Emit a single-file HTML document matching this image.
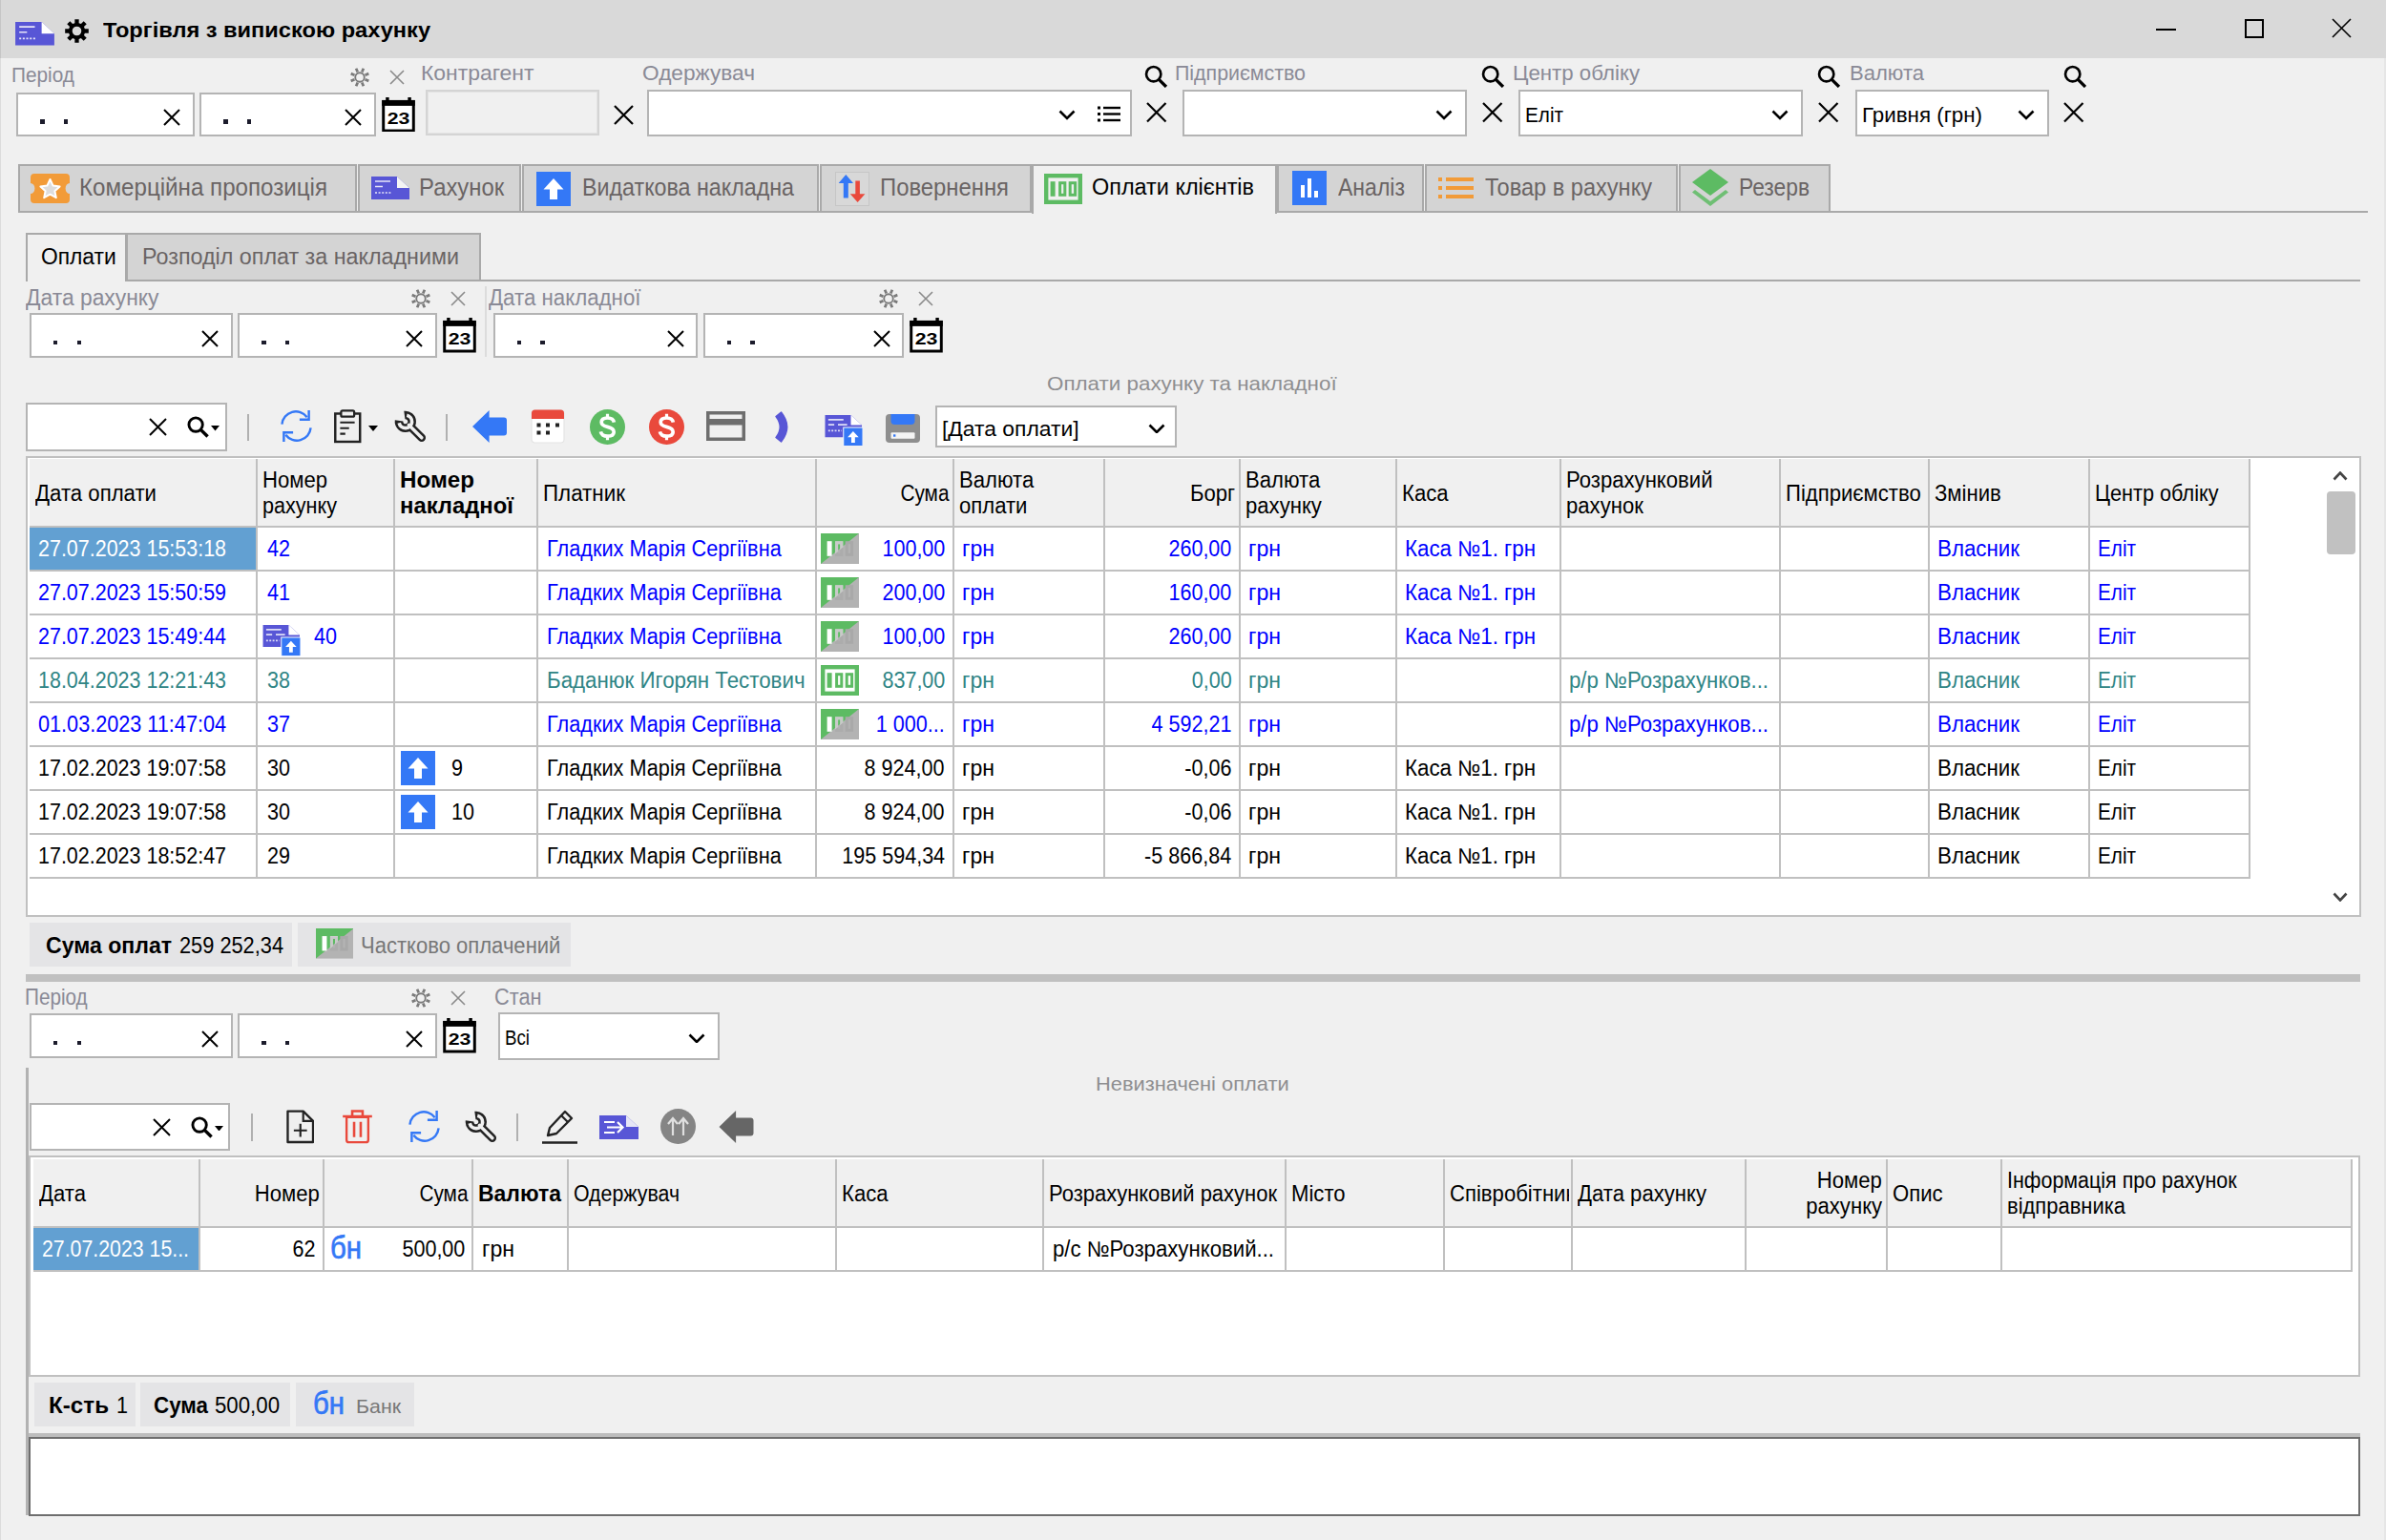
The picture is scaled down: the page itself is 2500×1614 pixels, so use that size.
<!DOCTYPE html>
<html><head><meta charset="utf-8"><title>UI</title>
<style>
html,body{margin:0;padding:0;}
body{width:2500px;height:1614px;background:#f0f0f0;position:relative;overflow:hidden;font-family:"Liberation Sans",sans-serif;}
body>div,body>span,body>svg{position:absolute;box-sizing:border-box;}
body>span{white-space:nowrap;}
</style></head><body>
<div style="left:0px;top:0px;width:2500px;height:61px;background:#d9d9d9;"></div>
<div style="left:0px;top:0px;width:1px;height:61px;background:#c6c6c6;"></div>
<div style="left:0px;top:61px;width:1px;height:1553px;background:#dcdcdc;"></div>
<div style="left:2498px;top:61px;width:2px;height:1553px;background:#e6e6e6;"></div>
<svg style="left:16px;top:23px" width="41" height="24.5" viewBox="0 0 40 24"><path d="M0 0H27L40 12V24H0Z" fill="#5856d6"/><path d="M27 0L40 12H27Z" fill="#fff"/><path d="M4 5H20M4 10.5H12" stroke="#fff" stroke-width="1.6" opacity=".85"/><path d="M4 17H22" stroke="#fff" stroke-width="1.6" stroke-dasharray="2 1.6" opacity=".85"/></svg>
<svg style="left:68px;top:20px" width="25" height="25" viewBox="0 0 24 24"><path d="M20.04 9.95L23.82 9.91L23.82 14.09L20.04 14.05L19.14 16.23L21.83 18.88L18.88 21.83L16.23 19.14L14.05 20.04L14.09 23.82L9.91 23.82L9.95 20.04L7.77 19.14L5.12 21.83L2.17 18.88L4.86 16.23L3.96 14.05L0.18 14.09L0.18 9.91L3.96 9.95L4.86 7.77L2.17 5.12L5.12 2.17L7.77 4.86L9.95 3.96L9.91 0.18L14.09 0.18L14.05 3.96L16.23 4.86L18.88 2.17L21.83 5.12L19.14 7.77ZM16.6 12A4.6 4.6 0 1 0 7.4 12A4.6 4.6 0 1 0 16.6 12Z" fill="#000" fill-rule="evenodd"/></svg>
<span style="left:108.3px;top:18.2px;font-size:21.5px;line-height:28px;color:#000;font-weight:bold;transform:scaleX(1.0985);transform-origin:0 0;">Торгівля з випискою рахунку</span>
<div style="left:2259px;top:29.5px;width:21px;height:2px;background:#000;"></div>
<div style="left:2352px;top:19.5px;width:20px;height:20px;border:2px solid #000;"></div>
<svg style="left:2443px;top:19px" width="21" height="21" viewBox="0 0 21 21"><path d="M1 1L20 20M20 1L1 20" stroke="#000" stroke-width="1.6" fill="none"/></svg>
<span style="left:11.5px;top:65.2px;font-size:21.5px;line-height:28px;color:#8a8a96;transform:scaleX(0.9682);transform-origin:0 0;">Період</span>
<svg style="left:366px;top:70px" width="22" height="22" viewBox="0 0 24 24"><circle cx="12" cy="12" r="5.2" fill="none" stroke="#7a7a7a" stroke-width="2"/><path d="M18.01 14.49L22.16 16.21M14.49 18.01L16.21 22.16M9.51 18.01L7.79 22.16M5.99 14.49L1.84 16.21M5.99 9.51L1.84 7.79M9.51 5.99L7.79 1.84M14.49 5.99L16.21 1.84M18.01 9.51L22.16 7.79" stroke="#7a7a7a" stroke-width="3" stroke-linecap="butt"/></svg>
<svg style="left:408px;top:73px" width="16" height="16" viewBox="0 0 16 16"><path d="M1 1L15 15M15 1L1 15" stroke="#8a8a8a" stroke-width="1.6" fill="none"/></svg>
<div style="left:17px;top:96.5px;width:186.5px;height:46.5px;background:#fff;border:2px solid #b4b4b4;"></div>
<div style="left:42.3px;top:125.0px;width:4.4px;height:4.6px;background:#1c1c2c;"></div>
<div style="left:66.8px;top:125.0px;width:4.4px;height:4.6px;background:#1c1c2c;"></div>
<svg style="left:171.0px;top:114.0px" width="18" height="18" viewBox="0 0 18 18"><path d="M1 1L17 17M17 1L1 17" stroke="#000" stroke-width="2" fill="none"/></svg>
<div style="left:209px;top:96.5px;width:184.5px;height:46.5px;background:#fff;border:2px solid #b4b4b4;"></div>
<div style="left:234.3px;top:125.0px;width:4.4px;height:4.6px;background:#1c1c2c;"></div>
<div style="left:258.8px;top:125.0px;width:4.4px;height:4.6px;background:#1c1c2c;"></div>
<svg style="left:361.0px;top:114.0px" width="18" height="18" viewBox="0 0 18 18"><path d="M1 1L17 17M17 1L1 17" stroke="#000" stroke-width="2" fill="none"/></svg>
<svg style="left:400px;top:101.5px" width="35" height="36.5" viewBox="0 0 35 37"><rect x="1.5" y="4.5" width="32" height="31" fill="#fff" stroke="#000" stroke-width="3"/><rect x="0" y="3" width="35" height="6" fill="#000"/><rect x="4" y="0" width="3.5" height="4" fill="#000"/><rect x="27.5" y="0" width="3.5" height="4" fill="#000"/><text x="17.5" y="28.5" font-family="Liberation Sans" font-weight="bold" font-size="16.5" text-anchor="middle" textLength="24" lengthAdjust="spacingAndGlyphs" fill="#000">23</text></svg>
<span style="left:441.0px;top:63.4px;font-size:21.5px;line-height:28px;color:#8a8a96;transform:scaleX(1.0661);transform-origin:0 0;">Контрагент</span>
<div style="left:446px;top:94px;width:182px;height:48px;background:#f0f0f0;border:2px solid #d4d4d4;"></div>
<div style="left:448px;top:96px;width:178px;height:44px;background:#f0f0f0;border:1px solid #e3e3e3;"></div>
<svg style="left:643px;top:110px" width="21" height="21" viewBox="0 0 21 21"><path d="M1 1L20 20M20 1L1 20" stroke="#000" stroke-width="2.2" fill="none"/></svg>
<span style="left:673.0px;top:63.4px;font-size:21.5px;line-height:28px;color:#8a8a96;transform:scaleX(1.0541);transform-origin:0 0;">Одержувач</span>
<div style="left:678px;top:94px;width:507.5px;height:49px;background:#fff;border:2px solid #b4b4b4;"></div>
<svg style="left:1108.5px;top:115.0px" width="18" height="10.5" viewBox="0 0 18 10.5"><path d="M1.5 1.5L9.0 9.0L16.5 1.5" fill="none" stroke="#000" stroke-width="2.6"/></svg>
<svg style="left:1150px;top:110.5px" width="24" height="17" viewBox="0 0 24 17"><rect x="0" y="0.5" width="3" height="3" fill="#000"/><rect x="6" y="0.8" width="18" height="2.4" fill="#000"/><rect x="0" y="7.0" width="3" height="3" fill="#000"/><rect x="6" y="7.3" width="18" height="2.4" fill="#000"/><rect x="0" y="13.5" width="3" height="3" fill="#000"/><rect x="6" y="13.8" width="18" height="2.4" fill="#000"/></svg>
<svg style="left:1199px;top:67.5px" width="24.5" height="24.5" viewBox="0 0 24 24"><circle cx="9.5" cy="9.5" r="7.5" fill="none" stroke="#000" stroke-width="2.6"/><path d="M15 15L22.5 22.5" stroke="#000" stroke-width="3.2" stroke-linecap="butt"/></svg>
<svg style="left:1201px;top:107px" width="21.5" height="21.5" viewBox="0 0 21.5 21.5"><path d="M1 1L20.5 20.5M20.5 1L1 20.5" stroke="#000" stroke-width="2.2" fill="none"/></svg>
<span style="left:1231.0px;top:63.4px;font-size:21.5px;line-height:28px;color:#8a8a96;transform:scaleX(0.9937);transform-origin:0 0;">Підприємство</span>
<div style="left:1239px;top:94px;width:298px;height:49px;background:#fff;border:2px solid #b4b4b4;"></div>
<svg style="left:1504px;top:115.0px" width="18" height="10.5" viewBox="0 0 18 10.5"><path d="M1.5 1.5L9.0 9.0L16.5 1.5" fill="none" stroke="#000" stroke-width="2.6"/></svg>
<svg style="left:1552px;top:67.5px" width="24.5" height="24.5" viewBox="0 0 24 24"><circle cx="9.5" cy="9.5" r="7.5" fill="none" stroke="#000" stroke-width="2.6"/><path d="M15 15L22.5 22.5" stroke="#000" stroke-width="3.2" stroke-linecap="butt"/></svg>
<svg style="left:1553px;top:107px" width="21.5" height="21.5" viewBox="0 0 21.5 21.5"><path d="M1 1L20.5 20.5M20.5 1L1 20.5" stroke="#000" stroke-width="2.2" fill="none"/></svg>
<span style="left:1585.0px;top:63.4px;font-size:21.5px;line-height:28px;color:#8a8a96;transform:scaleX(1.0348);transform-origin:0 0;">Центр обліку</span>
<div style="left:1590.5px;top:94px;width:298.5px;height:49px;background:#fff;border:2px solid #b4b4b4;"></div>
<span style="left:1597.5px;top:105.9px;font-size:22px;line-height:29px;color:#000;transform:scaleX(0.9418);transform-origin:0 0;">Еліт</span>
<svg style="left:1856.0px;top:115.0px" width="18" height="10.5" viewBox="0 0 18 10.5"><path d="M1.5 1.5L9.0 9.0L16.5 1.5" fill="none" stroke="#000" stroke-width="2.6"/></svg>
<svg style="left:1904px;top:67.5px" width="24.5" height="24.5" viewBox="0 0 24 24"><circle cx="9.5" cy="9.5" r="7.5" fill="none" stroke="#000" stroke-width="2.6"/><path d="M15 15L22.5 22.5" stroke="#000" stroke-width="3.2" stroke-linecap="butt"/></svg>
<svg style="left:1905px;top:107px" width="21.5" height="21.5" viewBox="0 0 21.5 21.5"><path d="M1 1L20.5 20.5M20.5 1L1 20.5" stroke="#000" stroke-width="2.2" fill="none"/></svg>
<span style="left:1938.0px;top:63.4px;font-size:21.5px;line-height:28px;color:#8a8a96;transform:scaleX(1.0256);transform-origin:0 0;">Валюта</span>
<div style="left:1944px;top:94px;width:203px;height:49px;background:#fff;border:2px solid #b4b4b4;"></div>
<span style="left:1951.0px;top:105.9px;font-size:22px;line-height:29px;color:#000;transform:scaleX(1.0151);transform-origin:0 0;">Гривня (грн)</span>
<svg style="left:2114px;top:115.0px" width="18" height="10.5" viewBox="0 0 18 10.5"><path d="M1.5 1.5L9.0 9.0L16.5 1.5" fill="none" stroke="#000" stroke-width="2.6"/></svg>
<svg style="left:2161.5px;top:67.5px" width="24.5" height="24.5" viewBox="0 0 24 24"><circle cx="9.5" cy="9.5" r="7.5" fill="none" stroke="#000" stroke-width="2.6"/><path d="M15 15L22.5 22.5" stroke="#000" stroke-width="3.2" stroke-linecap="butt"/></svg>
<svg style="left:2162px;top:107px" width="21.5" height="21.5" viewBox="0 0 21.5 21.5"><path d="M1 1L20.5 20.5M20.5 1L1 20.5" stroke="#000" stroke-width="2.2" fill="none"/></svg>
<div style="left:19px;top:221px;width:2462px;height:2px;background:#a9a9a9;"></div>
<div style="left:19px;top:172px;width:355px;height:51px;background:#d4d4d4;border:2px solid #a9a9a9;"></div>
<span style="left:83.0px;top:180.1px;font-size:25px;line-height:32px;color:#6a6464;transform:scaleX(0.9655);transform-origin:0 0;">Комерційна пропозиція</span>
<div style="left:374.5px;top:172px;width:171.5px;height:51px;background:#d4d4d4;border:2px solid #a9a9a9;"></div>
<span style="left:438.8px;top:180.1px;font-size:25px;line-height:32px;color:#6a6464;transform:scaleX(0.9551);transform-origin:0 0;">Рахунок</span>
<div style="left:546.5px;top:172px;width:311.5px;height:51px;background:#d4d4d4;border:2px solid #a9a9a9;"></div>
<span style="left:610.0px;top:180.1px;font-size:25px;line-height:32px;color:#6a6464;transform:scaleX(0.9300);transform-origin:0 0;">Видаткова накладна</span>
<div style="left:858.5px;top:172px;width:222.5px;height:51px;background:#d4d4d4;border:2px solid #a9a9a9;"></div>
<span style="left:922.0px;top:180.1px;font-size:25px;line-height:32px;color:#6a6464;transform:scaleX(0.9539);transform-origin:0 0;">Повернення</span>
<div style="left:1338px;top:172px;width:154px;height:51px;background:#d4d4d4;border:2px solid #a9a9a9;"></div>
<span style="left:1402.0px;top:180.1px;font-size:25px;line-height:32px;color:#6a6464;transform:scaleX(0.9212);transform-origin:0 0;">Аналіз</span>
<div style="left:1492.5px;top:172px;width:265.5px;height:51px;background:#d4d4d4;border:2px solid #a9a9a9;"></div>
<span style="left:1556.0px;top:180.1px;font-size:25px;line-height:32px;color:#6a6464;transform:scaleX(0.9433);transform-origin:0 0;">Товар в рахунку</span>
<div style="left:1758.5px;top:172px;width:159.5px;height:51px;background:#d4d4d4;border:2px solid #a9a9a9;"></div>
<span style="left:1822.0px;top:180.1px;font-size:25px;line-height:32px;color:#6a6464;transform:scaleX(0.9114);transform-origin:0 0;">Резерв</span>
<div style="left:1080.5px;top:171.5px;width:257.5px;height:52px;background:#f0f0f0;border:2px solid #a9a9a9;border-bottom:none;"></div>
<span style="left:1144.0px;top:180.7px;font-size:23.5px;line-height:31px;color:#000;transform:scaleX(0.9965);transform-origin:0 0;">Оплати клієнтів</span>
<svg style="left:32px;top:182px" width="41" height="31" viewBox="0 0 41 31"><path d="M4 0H37Q41 0 41 4V10A4 5 0 0 0 41 21V27Q41 31 37 31H4Q0 31 0 27V21A4 5 0 0 0 0 10V4Q0 0 4 0Z" fill="#f29b38"/><path d="M20.5 6L23.6 12.6L30.6 13.4L25.4 18.2L26.8 25.2L20.5 21.7L14.2 25.2L15.6 18.2L10.4 13.4L17.4 12.6Z" fill="#ddd" stroke="#fff" stroke-width="2" stroke-linejoin="round"/></svg>
<svg style="left:388.5px;top:185px" width="40" height="24" viewBox="0 0 40 24"><path d="M0 0H27L40 12V24H0Z" fill="#5856d6"/><path d="M27 0L40 12H27Z" fill="#f4f4f4"/><path d="M4 5H20M4 10.5H12" stroke="#fff" stroke-width="1.6" opacity=".85"/><path d="M4 17H22" stroke="#fff" stroke-width="1.6" stroke-dasharray="2 1.6" opacity=".85"/></svg>
<svg style="left:562px;top:179.5px" width="36" height="36" viewBox="0 0 36 36"><rect width="36" height="36" fill="#3478f6"/><path d="M18 7L28.5 18.5H22V29H14V18.5H7.5Z" fill="#fff"/></svg>
<svg style="left:875px;top:180px" width="36" height="36" viewBox="0 0 36 36"><rect x="0.5" y="0.5" width="35" height="35" fill="#d8d8d8" stroke="#c6c6c6"/><path d="M11.3 3L19 12H13.8V27.5H8.8V12H3.6Z" fill="#3478f6"/><path d="M23.6 32L15.8 23.3H21.3V9.5H25.9V23.3H31.4Z" fill="#e9493c"/></svg>
<svg style="left:1094px;top:181.5px" width="40" height="32" viewBox="0 0 40 32"><rect x="2.2" y="2.2" width="35.6" height="27.6" fill="#f0f0f0" stroke="#5dbb63" stroke-width="4.4"/><rect x="6.6" y="8.2" width="5" height="15.6" fill="#5dbb63"/><rect x="16.6" y="9.7" width="5.2" height="12.6" fill="none" stroke="#5dbb63" stroke-width="3"/><rect x="27.2" y="9.7" width="5.4" height="12.6" fill="none" stroke="#5dbb63" stroke-width="3"/></svg>
<svg style="left:1354px;top:179.3px" width="36" height="36" viewBox="0 0 36 36"><rect width="36" height="36" fill="#3478f6"/><rect x="9" y="15" width="4" height="13" fill="#fff"/><rect x="16" y="8" width="4" height="20" fill="#fff"/><rect x="23" y="21" width="4" height="7" fill="#fff"/></svg>
<svg style="left:1507px;top:186px" width="37" height="22" viewBox="0 0 37 22"><rect x="0" y="0" width="4" height="4" fill="#f29b38"/><rect x="8" y="0" width="29" height="4" fill="#f29b38"/><rect x="0" y="9" width="4" height="4" fill="#f29b38"/><rect x="8" y="9" width="29" height="4" fill="#f29b38"/><rect x="0" y="18" width="4" height="4" fill="#f29b38"/><rect x="8" y="18" width="29" height="4" fill="#f29b38"/></svg>
<svg style="left:1773px;top:177px" width="38" height="40" viewBox="0 0 38 40"><path d="M19 0L38 14L19 28L0 14Z" fill="#5dbb63"/><path d="M3 22L19 34L35 22L38 24.5L19 39L0 24.5Z" fill="#5dbb63" opacity=".85"/></svg>
<div style="left:27px;top:293px;width:2446px;height:2px;background:#a9a9a9;"></div>
<div style="left:132px;top:244px;width:372px;height:51px;background:#d4d4d4;border:2px solid #a9a9a9;"></div>
<div style="left:27px;top:244px;width:105.5px;height:51px;background:#f0f0f0;border:2px solid #a9a9a9;border-bottom:none;"></div>
<span style="left:42.7px;top:253.9px;font-size:23.5px;line-height:31px;color:#000;transform:scaleX(0.9697);transform-origin:0 0;">Оплати</span>
<span style="left:149.0px;top:253.9px;font-size:23.5px;line-height:31px;color:#6a6464;transform:scaleX(0.9915);transform-origin:0 0;">Розподіл оплат за накладними</span>
<span style="left:27.0px;top:297.0px;font-size:23px;line-height:30px;color:#8a8a96;transform:scaleX(0.9935);transform-origin:0 0;">Дата рахунку</span>
<svg style="left:430px;top:301.5px" width="22" height="22" viewBox="0 0 24 24"><circle cx="12" cy="12" r="5.2" fill="none" stroke="#7a7a7a" stroke-width="2"/><path d="M18.01 14.49L22.16 16.21M14.49 18.01L16.21 22.16M9.51 18.01L7.79 22.16M5.99 14.49L1.84 16.21M5.99 9.51L1.84 7.79M9.51 5.99L7.79 1.84M14.49 5.99L16.21 1.84M18.01 9.51L22.16 7.79" stroke="#7a7a7a" stroke-width="3" stroke-linecap="butt"/></svg>
<svg style="left:472px;top:305px" width="16" height="16" viewBox="0 0 16 16"><path d="M1 1L15 15M15 1L1 15" stroke="#8a8a8a" stroke-width="1.6" fill="none"/></svg>
<div style="left:30.7px;top:328px;width:213px;height:46.5px;background:#fff;border:2px solid #b4b4b4;"></div>
<div style="left:56.0px;top:356.5px;width:4.4px;height:4.6px;background:#1c1c2c;"></div>
<div style="left:80.5px;top:356.5px;width:4.4px;height:4.6px;background:#1c1c2c;"></div>
<svg style="left:211.2px;top:345.5px" width="18" height="18" viewBox="0 0 18 18"><path d="M1 1L17 17M17 1L1 17" stroke="#000" stroke-width="2" fill="none"/></svg>
<div style="left:249px;top:328px;width:208.5px;height:46.5px;background:#fff;border:2px solid #b4b4b4;"></div>
<div style="left:274.3px;top:356.5px;width:4.4px;height:4.6px;background:#1c1c2c;"></div>
<div style="left:298.8px;top:356.5px;width:4.4px;height:4.6px;background:#1c1c2c;"></div>
<svg style="left:425.0px;top:345.5px" width="18" height="18" viewBox="0 0 18 18"><path d="M1 1L17 17M17 1L1 17" stroke="#000" stroke-width="2" fill="none"/></svg>
<svg style="left:464px;top:333px" width="35" height="36.5" viewBox="0 0 35 37"><rect x="1.5" y="4.5" width="32" height="31" fill="#fff" stroke="#000" stroke-width="3"/><rect x="0" y="3" width="35" height="6" fill="#000"/><rect x="4" y="0" width="3.5" height="4" fill="#000"/><rect x="27.5" y="0" width="3.5" height="4" fill="#000"/><text x="17.5" y="28.5" font-family="Liberation Sans" font-weight="bold" font-size="16.5" text-anchor="middle" textLength="24" lengthAdjust="spacingAndGlyphs" fill="#000">23</text></svg>
<div style="left:508px;top:300px;width:2px;height:74px;background:#dcdcdc;"></div>
<span style="left:512.0px;top:297.0px;font-size:23px;line-height:30px;color:#8a8a96;transform:scaleX(0.9688);transform-origin:0 0;">Дата накладної</span>
<svg style="left:920px;top:301.5px" width="22" height="22" viewBox="0 0 24 24"><circle cx="12" cy="12" r="5.2" fill="none" stroke="#7a7a7a" stroke-width="2"/><path d="M18.01 14.49L22.16 16.21M14.49 18.01L16.21 22.16M9.51 18.01L7.79 22.16M5.99 14.49L1.84 16.21M5.99 9.51L1.84 7.79M9.51 5.99L7.79 1.84M14.49 5.99L16.21 1.84M18.01 9.51L22.16 7.79" stroke="#7a7a7a" stroke-width="3" stroke-linecap="butt"/></svg>
<svg style="left:962px;top:305px" width="16" height="16" viewBox="0 0 16 16"><path d="M1 1L15 15M15 1L1 15" stroke="#8a8a8a" stroke-width="1.6" fill="none"/></svg>
<div style="left:516.5px;top:328px;width:214.5px;height:46.5px;background:#fff;border:2px solid #b4b4b4;"></div>
<div style="left:541.8px;top:356.5px;width:4.4px;height:4.6px;background:#1c1c2c;"></div>
<div style="left:566.3px;top:356.5px;width:4.4px;height:4.6px;background:#1c1c2c;"></div>
<svg style="left:698.5px;top:345.5px" width="18" height="18" viewBox="0 0 18 18"><path d="M1 1L17 17M17 1L1 17" stroke="#000" stroke-width="2" fill="none"/></svg>
<div style="left:736.5px;top:328px;width:210.5px;height:46.5px;background:#fff;border:2px solid #b4b4b4;"></div>
<div style="left:761.8px;top:356.5px;width:4.4px;height:4.6px;background:#1c1c2c;"></div>
<div style="left:786.3px;top:356.5px;width:4.4px;height:4.6px;background:#1c1c2c;"></div>
<svg style="left:914.5px;top:345.5px" width="18" height="18" viewBox="0 0 18 18"><path d="M1 1L17 17M17 1L1 17" stroke="#000" stroke-width="2" fill="none"/></svg>
<svg style="left:953px;top:333px" width="35" height="36.5" viewBox="0 0 35 37"><rect x="1.5" y="4.5" width="32" height="31" fill="#fff" stroke="#000" stroke-width="3"/><rect x="0" y="3" width="35" height="6" fill="#000"/><rect x="4" y="0" width="3.5" height="4" fill="#000"/><rect x="27.5" y="0" width="3.5" height="4" fill="#000"/><text x="17.5" y="28.5" font-family="Liberation Sans" font-weight="bold" font-size="16.5" text-anchor="middle" textLength="24" lengthAdjust="spacingAndGlyphs" fill="#000">23</text></svg>
<span style="left:1097.4px;top:388.2px;font-size:21px;line-height:27px;color:#8e8e90;transform:scaleX(1.0655);transform-origin:0 0;">Оплати рахунку та накладної</span>
<div style="left:27px;top:422px;width:211px;height:50.5px;background:#fff;border:2px solid #b4b4b4;"></div>
<svg style="left:156px;top:438px" width="19" height="19" viewBox="0 0 19 19"><path d="M1 1L18 18M18 1L1 18" stroke="#000" stroke-width="2" fill="none"/></svg>
<svg style="left:196px;top:436px" width="23" height="23" viewBox="0 0 24 24"><circle cx="9.5" cy="9.5" r="7.5" fill="none" stroke="#000" stroke-width="3"/><path d="M15 15L22.5 22.5" stroke="#000" stroke-width="3.6" stroke-linecap="butt"/></svg>
<svg style="left:221px;top:446px" width="9" height="5.5" viewBox="0 0 9 5.5"><path d="M0 0H9L4.5 5.5Z" fill="#000"/></svg>
<div style="left:258.5px;top:434px;width:2px;height:28px;background:#b0b0b0;"></div>
<svg style="left:293px;top:429px" width="35" height="35" viewBox="0 0 36 36"><path d="M2.5 16A15 15 0 0 1 29.5 8.5" fill="none" stroke="#3478f6" stroke-width="2.5"/><path d="M31.5 1V11H21.5" fill="none" stroke="#3478f6" stroke-width="2.5"/><path d="M33.5 20A15 15 0 0 1 6.5 27.5" fill="none" stroke="#3478f6" stroke-width="2.5"/><path d="M4.5 35V25H14.5" fill="none" stroke="#3478f6" stroke-width="2.5"/></svg>
<svg style="left:350px;top:429px" width="28.5" height="35.5" viewBox="0 0 29 36"><rect x="1.3" y="4.5" width="26.4" height="30" fill="none" stroke="#222" stroke-width="2.5"/><rect x="7.5" y="1.3" width="14" height="6.4" rx="1.5" fill="#f0f0f0" stroke="#222" stroke-width="2.3"/><path d="M6.5 14H22M6.5 20H16M6.5 26H12" stroke="#222" stroke-width="2.1"/></svg>
<svg style="left:386px;top:446px" width="10" height="6" viewBox="0 0 10 6"><path d="M0 0H10L5.0 6Z" fill="#000"/></svg>
<svg style="left:413px;top:430px" width="35" height="35" viewBox="0 0 34 34"><path d="M10.58 4.96A6.6 6.6 0 1 1 4.96 10.58" fill="none" stroke="#222" stroke-width="8.4"/><path d="M17 17L28 28" stroke="#222" stroke-width="8.2" stroke-linecap="round"/><path d="M12.87 5.04A6.6 6.6 0 1 1 5.04 12.87" fill="none" stroke="#f0f0f0" stroke-width="3.6"/><path d="M15 15L28 28" stroke="#f0f0f0" stroke-width="3.4" stroke-linecap="round"/></svg>
<div style="left:466.5px;top:434px;width:2px;height:28px;background:#b0b0b0;"></div>
<svg style="left:494.5px;top:430px" width="36" height="34" viewBox="0 0 36 34"><path d="M0 17L17.6 0V7.5H33Q36 7.5 36 10.5V23.5Q36 26.5 33 26.5H17.6V34Z" fill="#3478f6"/></svg>
<svg style="left:556px;top:429px" width="36" height="36" viewBox="0 0 36 36"><rect x="1" y="1" width="34" height="34" rx="3.5" fill="#fff" stroke="#e4e4e4" stroke-width="1.2"/><path d="M1 4Q1 0.5 4.5 0.5H31.5Q35 0.5 35 4V10H1Z" fill="#e9493c"/><g fill="#222"><rect x="6.5" y="14.5" width="4" height="4"/><rect x="16" y="14.5" width="4" height="4"/><rect x="26" y="14.5" width="4" height="4"/><rect x="6.5" y="22.5" width="4" height="4"/><rect x="16" y="22.5" width="4" height="4"/></g></svg>
<svg style="left:618px;top:429px" width="37" height="37" viewBox="0 0 37 37"><circle cx="18.5" cy="18.5" r="18.5" fill="#5dbb63"/><path d="M25.4 13.6Q24.6 9 18.5 9Q12.2 9 12.2 13.6Q12.2 17 18.5 18.4Q25.2 19.9 25.2 23.8Q25.2 28.2 18.5 28.2Q12.4 28.2 11.4 23.4" fill="none" stroke="#fff" stroke-width="3.7"/><path d="M18.5 4.8V10M18.5 27V32.2" stroke="#fff" stroke-width="3.2"/></svg>
<svg style="left:679.5px;top:429px" width="37" height="37" viewBox="0 0 37 37"><circle cx="18.5" cy="18.5" r="18.5" fill="#e9493c"/><path d="M25.4 13.6Q24.6 9 18.5 9Q12.2 9 12.2 13.6Q12.2 17 18.5 18.4Q25.2 19.9 25.2 23.8Q25.2 28.2 18.5 28.2Q12.4 28.2 11.4 23.4" fill="none" stroke="#fff" stroke-width="3.7"/><path d="M18.5 4.8V10M18.5 27V32.2" stroke="#fff" stroke-width="3.2"/></svg>
<svg style="left:739.5px;top:431px" width="41" height="31" viewBox="0 0 41 31"><rect x="1.75" y="1.75" width="37.5" height="27.5" fill="none" stroke="#6e6e6e" stroke-width="3.5"/><rect x="0" y="8" width="41" height="6.5" fill="#6e6e6e"/></svg>
<svg style="left:812px;top:430.5px" width="16" height="33" viewBox="0 0 16 33"><path d="M6.5 1Q19 16.5 6.5 32L1 27.5Q9.5 16.5 1 5.5Z" fill="#5856d6" stroke="#5856d6" stroke-width="1.4" stroke-linejoin="round"/></svg>
<svg style="left:863.5px;top:434.5px" width="40.5" height="32.8" viewBox="0 0 41 34"><path d="M0 0H28L40 11V24H0Z" fill="#5856d6"/><path d="M28 0L40 11H28Z" fill="#fff"/><path d="M3.5 5H20M3.5 10.5H10M14 10.5H24" stroke="#fff" stroke-width="1.8" opacity=".8"/><path d="M3.5 17H18" stroke="#fff" stroke-width="1.8" stroke-dasharray="2 1.5" opacity=".8"/><rect x="20" y="13.5" width="21" height="20.5" fill="#3478f6" stroke="#fff" stroke-width="1"/><path d="M30.5 17.5L36.5 24H32.5V30H28.5V24H24.5Z" fill="#fff"/></svg>
<svg style="left:928px;top:433.5px" width="36" height="30" viewBox="0 0 36 30"><rect x="0" y="0" width="36" height="30" rx="4" fill="#8e8e8e"/><path d="M5.5 0H30.5V7Q30.5 11 26.5 11H9.5Q5.5 11 5.5 7Z" fill="#3478f6"/><rect x="5.5" y="19.3" width="25" height="6.4" rx="1" fill="#f4f4f4"/><rect x="8" y="21.3" width="2.4" height="2.4" fill="#3478f6"/></svg>
<div style="left:980.2px;top:425.2px;width:253px;height:43.9px;background:#fff;border:2px solid #b4b4b4;"></div>
<span style="left:987.2px;top:434.5px;font-size:22px;line-height:29px;color:#000;transform:scaleX(1.0388);transform-origin:0 0;">[Дата оплати]</span>
<svg style="left:1203.2px;top:443.65px" width="18" height="10.5" viewBox="0 0 18 10.5"><path d="M1.5 1.5L9.0 9.0L16.5 1.5" fill="none" stroke="#000" stroke-width="2.6"/></svg>
<div style="left:27px;top:477.5px;width:2446.5px;height:483px;background:#fff;border:2px solid #c0c0c0;"></div>
<div style="left:30.5px;top:481px;width:2325.5px;height:70px;background:#f0f0f0;"></div>
<div style="left:30.5px;top:551px;width:2326.5px;height:2px;background:#c0c0c0;"></div>
<div style="left:268px;top:481px;width:2px;height:440px;background:#c0c0c0;"></div>
<div style="left:412px;top:481px;width:2px;height:440px;background:#c0c0c0;"></div>
<div style="left:562px;top:481px;width:2px;height:440px;background:#c0c0c0;"></div>
<div style="left:854px;top:481px;width:2px;height:440px;background:#c0c0c0;"></div>
<div style="left:998px;top:481px;width:2px;height:440px;background:#c0c0c0;"></div>
<div style="left:1155.6px;top:481px;width:2px;height:440px;background:#c0c0c0;"></div>
<div style="left:1297.7px;top:481px;width:2px;height:440px;background:#c0c0c0;"></div>
<div style="left:1462px;top:481px;width:2px;height:440px;background:#c0c0c0;"></div>
<div style="left:1634px;top:481px;width:2px;height:440px;background:#c0c0c0;"></div>
<div style="left:1863.5px;top:481px;width:2px;height:440px;background:#c0c0c0;"></div>
<div style="left:2019.5px;top:481px;width:2px;height:440px;background:#c0c0c0;"></div>
<div style="left:2187.7px;top:481px;width:2px;height:440px;background:#c0c0c0;"></div>
<div style="left:2356px;top:481px;width:2px;height:440px;background:#c0c0c0;"></div>
<div style="left:30.5px;top:597px;width:2326.5px;height:2px;background:#c0c0c0;"></div>
<div style="left:30.5px;top:643px;width:2326.5px;height:2px;background:#c0c0c0;"></div>
<div style="left:30.5px;top:689px;width:2326.5px;height:2px;background:#c0c0c0;"></div>
<div style="left:30.5px;top:735px;width:2326.5px;height:2px;background:#c0c0c0;"></div>
<div style="left:30.5px;top:781px;width:2326.5px;height:2px;background:#c0c0c0;"></div>
<div style="left:30.5px;top:827px;width:2326.5px;height:2px;background:#c0c0c0;"></div>
<div style="left:30.5px;top:873px;width:2326.5px;height:2px;background:#c0c0c0;"></div>
<div style="left:30.5px;top:919px;width:2326.5px;height:2px;background:#c0c0c0;"></div>
<span style="left:36.5px;top:502.3px;font-size:23px;line-height:30px;color:#000;transform:scaleX(0.9647);transform-origin:0 0;">Дата оплати</span>
<span style="left:275.0px;top:488.0px;font-size:23px;line-height:30px;color:#000;transform:scaleX(0.9605);transform-origin:0 0;">Номер</span>
<span style="left:275.0px;top:515.1px;font-size:23px;line-height:30px;color:#000;transform:scaleX(0.9386);transform-origin:0 0;">рахунку</span>
<span style="left:419.0px;top:488.0px;font-size:23px;line-height:30px;color:#000;font-weight:bold;transform:scaleX(1.0511);transform-origin:0 0;">Номер</span>
<span style="left:419.0px;top:515.1px;font-size:23px;line-height:30px;color:#000;font-weight:bold;transform:scaleX(1.0358);transform-origin:0 0;">накладної</span>
<span style="left:569.0px;top:502.3px;font-size:23px;line-height:30px;color:#000;transform:scaleX(0.9731);transform-origin:0 0;">Платник</span>
<span style="right:1505.5px;top:502.3px;font-size:23px;line-height:30px;color:#000;transform:scaleX(0.9034);transform-origin:100% 0;">Сума</span>
<span style="left:1005.0px;top:488.0px;font-size:23px;line-height:30px;color:#000;transform:scaleX(0.9613);transform-origin:0 0;">Валюта</span>
<span style="left:1005.0px;top:515.1px;font-size:23px;line-height:30px;color:#000;transform:scaleX(0.9613);transform-origin:0 0;">оплати</span>
<span style="right:1205.8px;top:502.3px;font-size:23px;line-height:30px;color:#000;transform:scaleX(0.9613);transform-origin:100% 0;">Борг</span>
<span style="left:1304.7px;top:488.0px;font-size:23px;line-height:30px;color:#000;transform:scaleX(0.9613);transform-origin:0 0;">Валюта</span>
<span style="left:1304.7px;top:515.1px;font-size:23px;line-height:30px;color:#000;transform:scaleX(0.9613);transform-origin:0 0;">рахунку</span>
<span style="left:1469.0px;top:502.3px;font-size:23px;line-height:30px;color:#000;transform:scaleX(0.9613);transform-origin:0 0;">Каса</span>
<span style="left:1641.0px;top:488.0px;font-size:23px;line-height:30px;color:#000;transform:scaleX(0.9613);transform-origin:0 0;">Розрахунковий</span>
<span style="left:1641.0px;top:515.1px;font-size:23px;line-height:30px;color:#000;transform:scaleX(0.9613);transform-origin:0 0;">рахунок</span>
<span style="left:1870.5px;top:502.3px;font-size:23px;line-height:30px;color:#000;transform:scaleX(0.9613);transform-origin:0 0;">Підприємство</span>
<span style="left:2026.5px;top:502.3px;font-size:23px;line-height:30px;color:#000;transform:scaleX(0.9613);transform-origin:0 0;">Змінив</span>
<span style="left:2194.7px;top:502.3px;font-size:23px;line-height:30px;color:#000;transform:scaleX(0.9418);transform-origin:0 0;">Центр обліку</span>
<div style="left:30.5px;top:553px;width:237.5px;height:44px;background:#62a0d2;"></div>
<span style="left:39.6px;top:560.0px;font-size:23px;line-height:30px;color:#fff;transform:scaleX(0.9336);transform-origin:0 0;">27.07.2023 15:53:18</span>
<span style="left:279.7px;top:560.0px;font-size:23px;line-height:30px;color:#0000ff;transform:scaleX(0.9374);transform-origin:0 0;">42</span>
<span style="left:572.5px;top:560.0px;font-size:23px;line-height:30px;color:#0000ff;transform:scaleX(0.9438);transform-origin:0 0;">Гладких Марія Сергіївна</span>
<svg style="left:860px;top:558.7px" width="40" height="32" viewBox="0 0 40 32"><rect width="40" height="32" fill="#b3b3b3"/><path d="M0 0H40L0 32Z" fill="#5dbb63"/><rect x="6.6" y="8.2" width="5" height="15.6" fill="#fff"/><path d="M15.1 8.2H23.3V14.5L20.3 17V11.2H18.1V19L15.1 21.5Z" fill="#f4f4f4"/><rect x="16.6" y="9.7" width="5.2" height="12.6" fill="none" stroke="#a6a6a6" stroke-width="3" opacity=".55"/><rect x="27.2" y="9.7" width="5.4" height="12.6" fill="none" stroke="#a9a9a9" stroke-width="3"/></svg>
<span style="right:1510.0px;top:560.0px;font-size:23px;line-height:30px;color:#0000ff;transform:scaleX(0.9374);transform-origin:100% 0;">100,00</span>
<span style="left:1008.0px;top:560.0px;font-size:23px;line-height:30px;color:#0000ff;transform:scaleX(1.0036);transform-origin:0 0;">грн</span>
<span style="right:1209.5px;top:560.0px;font-size:23px;line-height:30px;color:#0000ff;transform:scaleX(0.9374);transform-origin:100% 0;">260,00</span>
<span style="left:1308.0px;top:560.0px;font-size:23px;line-height:30px;color:#0000ff;transform:scaleX(1.0036);transform-origin:0 0;">грн</span>
<span style="left:1472.0px;top:560.0px;font-size:23px;line-height:30px;color:#0000ff;transform:scaleX(0.9717);transform-origin:0 0;">Каса №1. грн</span>
<span style="left:2030.0px;top:560.0px;font-size:23px;line-height:30px;color:#0000ff;transform:scaleX(0.9700);transform-origin:0 0;">Власник</span>
<span style="left:2198.0px;top:560.0px;font-size:23px;line-height:30px;color:#0000ff;transform:scaleX(0.9008);transform-origin:0 0;">Еліт</span>
<span style="left:39.6px;top:606.0px;font-size:23px;line-height:30px;color:#0000ff;transform:scaleX(0.9336);transform-origin:0 0;">27.07.2023 15:50:59</span>
<span style="left:279.7px;top:606.0px;font-size:23px;line-height:30px;color:#0000ff;transform:scaleX(0.9374);transform-origin:0 0;">41</span>
<span style="left:572.5px;top:606.0px;font-size:23px;line-height:30px;color:#0000ff;transform:scaleX(0.9438);transform-origin:0 0;">Гладких Марія Сергіївна</span>
<svg style="left:860px;top:604.7px" width="40" height="32" viewBox="0 0 40 32"><rect width="40" height="32" fill="#b3b3b3"/><path d="M0 0H40L0 32Z" fill="#5dbb63"/><rect x="6.6" y="8.2" width="5" height="15.6" fill="#fff"/><path d="M15.1 8.2H23.3V14.5L20.3 17V11.2H18.1V19L15.1 21.5Z" fill="#f4f4f4"/><rect x="16.6" y="9.7" width="5.2" height="12.6" fill="none" stroke="#a6a6a6" stroke-width="3" opacity=".55"/><rect x="27.2" y="9.7" width="5.4" height="12.6" fill="none" stroke="#a9a9a9" stroke-width="3"/></svg>
<span style="right:1510.0px;top:606.0px;font-size:23px;line-height:30px;color:#0000ff;transform:scaleX(0.9374);transform-origin:100% 0;">200,00</span>
<span style="left:1008.0px;top:606.0px;font-size:23px;line-height:30px;color:#0000ff;transform:scaleX(1.0036);transform-origin:0 0;">грн</span>
<span style="right:1209.5px;top:606.0px;font-size:23px;line-height:30px;color:#0000ff;transform:scaleX(0.9374);transform-origin:100% 0;">160,00</span>
<span style="left:1308.0px;top:606.0px;font-size:23px;line-height:30px;color:#0000ff;transform:scaleX(1.0036);transform-origin:0 0;">грн</span>
<span style="left:1472.0px;top:606.0px;font-size:23px;line-height:30px;color:#0000ff;transform:scaleX(0.9717);transform-origin:0 0;">Каса №1. грн</span>
<span style="left:2030.0px;top:606.0px;font-size:23px;line-height:30px;color:#0000ff;transform:scaleX(0.9700);transform-origin:0 0;">Власник</span>
<span style="left:2198.0px;top:606.0px;font-size:23px;line-height:30px;color:#0000ff;transform:scaleX(0.9008);transform-origin:0 0;">Еліт</span>
<span style="left:39.6px;top:652.0px;font-size:23px;line-height:30px;color:#0000ff;transform:scaleX(0.9336);transform-origin:0 0;">27.07.2023 15:49:44</span>
<svg style="left:274.5px;top:655.3px" width="40.5" height="32.7" viewBox="0 0 41 34"><path d="M0 0H28L40 11V24H0Z" fill="#5856d6"/><path d="M28 0L40 11H28Z" fill="#fff"/><path d="M3.5 5H20M3.5 10.5H10M14 10.5H24" stroke="#fff" stroke-width="1.8" opacity=".8"/><path d="M3.5 17H18" stroke="#fff" stroke-width="1.8" stroke-dasharray="2 1.5" opacity=".8"/><rect x="20" y="13.5" width="21" height="20.5" fill="#3478f6" stroke="#fff" stroke-width="1"/><path d="M30.5 17.5L36.5 24H32.5V30H28.5V24H24.5Z" fill="#fff"/></svg>
<span style="left:329.0px;top:652.0px;font-size:23px;line-height:30px;color:#0000ff;transform:scaleX(0.9374);transform-origin:0 0;">40</span>
<span style="left:572.5px;top:652.0px;font-size:23px;line-height:30px;color:#0000ff;transform:scaleX(0.9438);transform-origin:0 0;">Гладких Марія Сергіївна</span>
<svg style="left:860px;top:650.7px" width="40" height="32" viewBox="0 0 40 32"><rect width="40" height="32" fill="#b3b3b3"/><path d="M0 0H40L0 32Z" fill="#5dbb63"/><rect x="6.6" y="8.2" width="5" height="15.6" fill="#fff"/><path d="M15.1 8.2H23.3V14.5L20.3 17V11.2H18.1V19L15.1 21.5Z" fill="#f4f4f4"/><rect x="16.6" y="9.7" width="5.2" height="12.6" fill="none" stroke="#a6a6a6" stroke-width="3" opacity=".55"/><rect x="27.2" y="9.7" width="5.4" height="12.6" fill="none" stroke="#a9a9a9" stroke-width="3"/></svg>
<span style="right:1510.0px;top:652.0px;font-size:23px;line-height:30px;color:#0000ff;transform:scaleX(0.9374);transform-origin:100% 0;">100,00</span>
<span style="left:1008.0px;top:652.0px;font-size:23px;line-height:30px;color:#0000ff;transform:scaleX(1.0036);transform-origin:0 0;">грн</span>
<span style="right:1209.5px;top:652.0px;font-size:23px;line-height:30px;color:#0000ff;transform:scaleX(0.9374);transform-origin:100% 0;">260,00</span>
<span style="left:1308.0px;top:652.0px;font-size:23px;line-height:30px;color:#0000ff;transform:scaleX(1.0036);transform-origin:0 0;">грн</span>
<span style="left:1472.0px;top:652.0px;font-size:23px;line-height:30px;color:#0000ff;transform:scaleX(0.9717);transform-origin:0 0;">Каса №1. грн</span>
<span style="left:2030.0px;top:652.0px;font-size:23px;line-height:30px;color:#0000ff;transform:scaleX(0.9700);transform-origin:0 0;">Власник</span>
<span style="left:2198.0px;top:652.0px;font-size:23px;line-height:30px;color:#0000ff;transform:scaleX(0.9008);transform-origin:0 0;">Еліт</span>
<span style="left:39.6px;top:698.0px;font-size:23px;line-height:30px;color:#2f8585;transform:scaleX(0.9336);transform-origin:0 0;">18.04.2023 12:21:43</span>
<span style="left:279.7px;top:698.0px;font-size:23px;line-height:30px;color:#2f8585;transform:scaleX(0.9374);transform-origin:0 0;">38</span>
<span style="left:572.5px;top:698.0px;font-size:23px;line-height:30px;color:#2f8585;transform:scaleX(0.9698);transform-origin:0 0;">Баданюк Игорян Тестович</span>
<svg style="left:860px;top:696.7px" width="40" height="32" viewBox="0 0 40 32"><rect x="2.2" y="2.2" width="35.6" height="27.6" fill="#fff" stroke="#5dbb63" stroke-width="4.4"/><rect x="6.6" y="8.2" width="5" height="15.6" fill="#5dbb63"/><rect x="16.6" y="9.7" width="5.2" height="12.6" fill="none" stroke="#5dbb63" stroke-width="3"/><rect x="27.2" y="9.7" width="5.4" height="12.6" fill="none" stroke="#5dbb63" stroke-width="3"/></svg>
<span style="right:1510.0px;top:698.0px;font-size:23px;line-height:30px;color:#2f8585;transform:scaleX(0.9374);transform-origin:100% 0;">837,00</span>
<span style="left:1008.0px;top:698.0px;font-size:23px;line-height:30px;color:#2f8585;transform:scaleX(1.0036);transform-origin:0 0;">грн</span>
<span style="right:1209.5px;top:698.0px;font-size:23px;line-height:30px;color:#2f8585;transform:scaleX(0.9374);transform-origin:100% 0;">0,00</span>
<span style="left:1308.0px;top:698.0px;font-size:23px;line-height:30px;color:#2f8585;transform:scaleX(1.0036);transform-origin:0 0;">грн</span>
<span style="left:1644.0px;top:698.0px;font-size:23px;line-height:30px;color:#2f8585;transform:scaleX(0.9666);transform-origin:0 0;">р/р №Розрахунков...</span>
<span style="left:2030.0px;top:698.0px;font-size:23px;line-height:30px;color:#2f8585;transform:scaleX(0.9700);transform-origin:0 0;">Власник</span>
<span style="left:2198.0px;top:698.0px;font-size:23px;line-height:30px;color:#2f8585;transform:scaleX(0.9008);transform-origin:0 0;">Еліт</span>
<span style="left:39.6px;top:744.0px;font-size:23px;line-height:30px;color:#0000ff;transform:scaleX(0.9412);transform-origin:0 0;">01.03.2023 11:47:04</span>
<span style="left:279.7px;top:744.0px;font-size:23px;line-height:30px;color:#0000ff;transform:scaleX(0.9374);transform-origin:0 0;">37</span>
<span style="left:572.5px;top:744.0px;font-size:23px;line-height:30px;color:#0000ff;transform:scaleX(0.9438);transform-origin:0 0;">Гладких Марія Сергіївна</span>
<svg style="left:860px;top:742.7px" width="40" height="32" viewBox="0 0 40 32"><rect width="40" height="32" fill="#b3b3b3"/><path d="M0 0H40L0 32Z" fill="#5dbb63"/><rect x="6.6" y="8.2" width="5" height="15.6" fill="#fff"/><path d="M15.1 8.2H23.3V14.5L20.3 17V11.2H18.1V19L15.1 21.5Z" fill="#f4f4f4"/><rect x="16.6" y="9.7" width="5.2" height="12.6" fill="none" stroke="#a6a6a6" stroke-width="3" opacity=".55"/><rect x="27.2" y="9.7" width="5.4" height="12.6" fill="none" stroke="#a9a9a9" stroke-width="3"/></svg>
<span style="right:1510.0px;top:744.0px;font-size:23px;line-height:30px;color:#0000ff;transform:scaleX(0.9374);transform-origin:100% 0;">1 000...</span>
<span style="left:1008.0px;top:744.0px;font-size:23px;line-height:30px;color:#0000ff;transform:scaleX(1.0036);transform-origin:0 0;">грн</span>
<span style="right:1209.5px;top:744.0px;font-size:23px;line-height:30px;color:#0000ff;transform:scaleX(0.9374);transform-origin:100% 0;">4 592,21</span>
<span style="left:1308.0px;top:744.0px;font-size:23px;line-height:30px;color:#0000ff;transform:scaleX(1.0036);transform-origin:0 0;">грн</span>
<span style="left:1644.0px;top:744.0px;font-size:23px;line-height:30px;color:#0000ff;transform:scaleX(0.9666);transform-origin:0 0;">р/р №Розрахунков...</span>
<span style="left:2030.0px;top:744.0px;font-size:23px;line-height:30px;color:#0000ff;transform:scaleX(0.9700);transform-origin:0 0;">Власник</span>
<span style="left:2198.0px;top:744.0px;font-size:23px;line-height:30px;color:#0000ff;transform:scaleX(0.9008);transform-origin:0 0;">Еліт</span>
<span style="left:39.6px;top:790.0px;font-size:23px;line-height:30px;color:#000;transform:scaleX(0.9336);transform-origin:0 0;">17.02.2023 19:07:58</span>
<span style="left:279.7px;top:790.0px;font-size:23px;line-height:30px;color:#000;transform:scaleX(0.9374);transform-origin:0 0;">30</span>
<svg style="left:420.3px;top:787px" width="36" height="36" viewBox="0 0 36 36"><rect width="36" height="36" fill="#3478f6"/><path d="M18 7L28.5 18.5H22V29H14V18.5H7.5Z" fill="#fff"/></svg>
<span style="left:472.6px;top:790.0px;font-size:23px;line-height:30px;color:#000;transform:scaleX(0.9374);transform-origin:0 0;">9</span>
<span style="left:572.5px;top:790.0px;font-size:23px;line-height:30px;color:#000;transform:scaleX(0.9438);transform-origin:0 0;">Гладких Марія Сергіївна</span>
<span style="right:1510.0px;top:790.0px;font-size:23px;line-height:30px;color:#000;transform:scaleX(0.9374);transform-origin:100% 0;">8 924,00</span>
<span style="left:1008.0px;top:790.0px;font-size:23px;line-height:30px;color:#000;transform:scaleX(1.0036);transform-origin:0 0;">грн</span>
<span style="right:1209.5px;top:790.0px;font-size:23px;line-height:30px;color:#000;transform:scaleX(0.9374);transform-origin:100% 0;">-0,06</span>
<span style="left:1308.0px;top:790.0px;font-size:23px;line-height:30px;color:#000;transform:scaleX(1.0036);transform-origin:0 0;">грн</span>
<span style="left:1472.0px;top:790.0px;font-size:23px;line-height:30px;color:#000;transform:scaleX(0.9717);transform-origin:0 0;">Каса №1. грн</span>
<span style="left:2030.0px;top:790.0px;font-size:23px;line-height:30px;color:#000;transform:scaleX(0.9700);transform-origin:0 0;">Власник</span>
<span style="left:2198.0px;top:790.0px;font-size:23px;line-height:30px;color:#000;transform:scaleX(0.9008);transform-origin:0 0;">Еліт</span>
<span style="left:39.6px;top:836.0px;font-size:23px;line-height:30px;color:#000;transform:scaleX(0.9336);transform-origin:0 0;">17.02.2023 19:07:58</span>
<span style="left:279.7px;top:836.0px;font-size:23px;line-height:30px;color:#000;transform:scaleX(0.9374);transform-origin:0 0;">30</span>
<svg style="left:420.3px;top:833px" width="36" height="36" viewBox="0 0 36 36"><rect width="36" height="36" fill="#3478f6"/><path d="M18 7L28.5 18.5H22V29H14V18.5H7.5Z" fill="#fff"/></svg>
<span style="left:472.6px;top:836.0px;font-size:23px;line-height:30px;color:#000;transform:scaleX(0.9374);transform-origin:0 0;">10</span>
<span style="left:572.5px;top:836.0px;font-size:23px;line-height:30px;color:#000;transform:scaleX(0.9438);transform-origin:0 0;">Гладких Марія Сергіївна</span>
<span style="right:1510.0px;top:836.0px;font-size:23px;line-height:30px;color:#000;transform:scaleX(0.9374);transform-origin:100% 0;">8 924,00</span>
<span style="left:1008.0px;top:836.0px;font-size:23px;line-height:30px;color:#000;transform:scaleX(1.0036);transform-origin:0 0;">грн</span>
<span style="right:1209.5px;top:836.0px;font-size:23px;line-height:30px;color:#000;transform:scaleX(0.9374);transform-origin:100% 0;">-0,06</span>
<span style="left:1308.0px;top:836.0px;font-size:23px;line-height:30px;color:#000;transform:scaleX(1.0036);transform-origin:0 0;">грн</span>
<span style="left:1472.0px;top:836.0px;font-size:23px;line-height:30px;color:#000;transform:scaleX(0.9717);transform-origin:0 0;">Каса №1. грн</span>
<span style="left:2030.0px;top:836.0px;font-size:23px;line-height:30px;color:#000;transform:scaleX(0.9700);transform-origin:0 0;">Власник</span>
<span style="left:2198.0px;top:836.0px;font-size:23px;line-height:30px;color:#000;transform:scaleX(0.9008);transform-origin:0 0;">Еліт</span>
<span style="left:39.6px;top:882.0px;font-size:23px;line-height:30px;color:#000;transform:scaleX(0.9336);transform-origin:0 0;">17.02.2023 18:52:47</span>
<span style="left:279.7px;top:882.0px;font-size:23px;line-height:30px;color:#000;transform:scaleX(0.9374);transform-origin:0 0;">29</span>
<span style="left:572.5px;top:882.0px;font-size:23px;line-height:30px;color:#000;transform:scaleX(0.9438);transform-origin:0 0;">Гладких Марія Сергіївна</span>
<span style="right:1510.0px;top:882.0px;font-size:23px;line-height:30px;color:#000;transform:scaleX(0.9374);transform-origin:100% 0;">195 594,34</span>
<span style="left:1008.0px;top:882.0px;font-size:23px;line-height:30px;color:#000;transform:scaleX(1.0036);transform-origin:0 0;">грн</span>
<span style="right:1209.5px;top:882.0px;font-size:23px;line-height:30px;color:#000;transform:scaleX(0.9374);transform-origin:100% 0;">-5 866,84</span>
<span style="left:1308.0px;top:882.0px;font-size:23px;line-height:30px;color:#000;transform:scaleX(1.0036);transform-origin:0 0;">грн</span>
<span style="left:1472.0px;top:882.0px;font-size:23px;line-height:30px;color:#000;transform:scaleX(0.9717);transform-origin:0 0;">Каса №1. грн</span>
<span style="left:2030.0px;top:882.0px;font-size:23px;line-height:30px;color:#000;transform:scaleX(0.9700);transform-origin:0 0;">Власник</span>
<span style="left:2198.0px;top:882.0px;font-size:23px;line-height:30px;color:#000;transform:scaleX(0.9008);transform-origin:0 0;">Еліт</span>
<svg style="left:2444px;top:494px" width="16" height="10" viewBox="0 0 16 10"><path d="M1.5 8.5L8.0 1.5L14.5 8.5" fill="none" stroke="#444" stroke-width="2.6"/></svg>
<div style="left:2438px;top:515px;width:29.5px;height:65.5px;background:#c1c1c1;border-radius:4px;"></div>
<svg style="left:2444px;top:935px" width="16" height="10" viewBox="0 0 16 10"><path d="M1.5 1.5L8.0 8.5L14.5 1.5" fill="none" stroke="#444" stroke-width="2.6"/></svg>
<div style="left:31.3px;top:967px;width:274.7px;height:45.6px;background:#e4e4e6;"></div>
<span style="left:47.7px;top:975.8px;font-size:23px;line-height:30px;color:#000;font-weight:bold;transform:scaleX(1.0031);transform-origin:0 0;">Сума оплат</span>
<span style="left:187.7px;top:975.8px;font-size:23px;line-height:30px;color:#000;transform:scaleX(0.9470);transform-origin:0 0;">259 252,34</span>
<div style="left:311.7px;top:967px;width:286.6px;height:45.6px;background:#e4e4e6;"></div>
<svg style="left:330.5px;top:973px" width="39.5" height="31.6" viewBox="0 0 40 32"><rect width="40" height="32" fill="#b3b3b3"/><path d="M0 0H40L0 32Z" fill="#5dbb63"/><rect x="6.6" y="8.2" width="5" height="15.6" fill="#fff"/><path d="M15.1 8.2H23.3V14.5L20.3 17V11.2H18.1V19L15.1 21.5Z" fill="#f4f4f4"/><rect x="16.6" y="9.7" width="5.2" height="12.6" fill="none" stroke="#a6a6a6" stroke-width="3" opacity=".55"/><rect x="27.2" y="9.7" width="5.4" height="12.6" fill="none" stroke="#a9a9a9" stroke-width="3"/></svg>
<span style="left:377.6px;top:975.8px;font-size:23px;line-height:30px;color:#777;transform:scaleX(0.9583);transform-origin:0 0;">Частково оплачений</span>
<div style="left:27px;top:1021.4px;width:2446px;height:7.8px;background:#c0c0c0;"></div>
<span style="left:26.0px;top:1029.6px;font-size:23px;line-height:30px;color:#8a8a96;transform:scaleX(0.9009);transform-origin:0 0;">Період</span>
<svg style="left:430px;top:1034.5px" width="22" height="22" viewBox="0 0 24 24"><circle cx="12" cy="12" r="5.2" fill="none" stroke="#7a7a7a" stroke-width="2"/><path d="M18.01 14.49L22.16 16.21M14.49 18.01L16.21 22.16M9.51 18.01L7.79 22.16M5.99 14.49L1.84 16.21M5.99 9.51L1.84 7.79M9.51 5.99L7.79 1.84M14.49 5.99L16.21 1.84M18.01 9.51L22.16 7.79" stroke="#7a7a7a" stroke-width="3" stroke-linecap="butt"/></svg>
<svg style="left:472px;top:1038px" width="16" height="16" viewBox="0 0 16 16"><path d="M1 1L15 15M15 1L1 15" stroke="#8a8a8a" stroke-width="1.6" fill="none"/></svg>
<div style="left:30.7px;top:1062px;width:213px;height:46.5px;background:#fff;border:2px solid #b4b4b4;"></div>
<div style="left:56.0px;top:1090.5px;width:4.4px;height:4.6px;background:#1c1c2c;"></div>
<div style="left:80.5px;top:1090.5px;width:4.4px;height:4.6px;background:#1c1c2c;"></div>
<svg style="left:211.2px;top:1079.5px" width="18" height="18" viewBox="0 0 18 18"><path d="M1 1L17 17M17 1L1 17" stroke="#000" stroke-width="2" fill="none"/></svg>
<div style="left:249px;top:1062px;width:208.5px;height:46.5px;background:#fff;border:2px solid #b4b4b4;"></div>
<div style="left:274.3px;top:1090.5px;width:4.4px;height:4.6px;background:#1c1c2c;"></div>
<div style="left:298.8px;top:1090.5px;width:4.4px;height:4.6px;background:#1c1c2c;"></div>
<svg style="left:425.0px;top:1079.5px" width="18" height="18" viewBox="0 0 18 18"><path d="M1 1L17 17M17 1L1 17" stroke="#000" stroke-width="2" fill="none"/></svg>
<svg style="left:464px;top:1067px" width="35" height="36.5" viewBox="0 0 35 37"><rect x="1.5" y="4.5" width="32" height="31" fill="#fff" stroke="#000" stroke-width="3"/><rect x="0" y="3" width="35" height="6" fill="#000"/><rect x="4" y="0" width="3.5" height="4" fill="#000"/><rect x="27.5" y="0" width="3.5" height="4" fill="#000"/><text x="17.5" y="28.5" font-family="Liberation Sans" font-weight="bold" font-size="16.5" text-anchor="middle" textLength="24" lengthAdjust="spacingAndGlyphs" fill="#000">23</text></svg>
<span style="left:517.5px;top:1029.6px;font-size:23px;line-height:30px;color:#8a8a96;transform:scaleX(0.9451);transform-origin:0 0;">Стан</span>
<div style="left:522px;top:1061px;width:232px;height:50px;background:#fff;border:2px solid #b4b4b4;"></div>
<span style="left:529.0px;top:1073.4px;font-size:22px;line-height:29px;color:#000;transform:scaleX(0.8507);transform-origin:0 0;">Всі</span>
<svg style="left:721px;top:1082.5px" width="18" height="10.5" viewBox="0 0 18 10.5"><path d="M1.5 1.5L9.0 9.0L16.5 1.5" fill="none" stroke="#000" stroke-width="2.6"/></svg>
<div style="left:27px;top:1119px;width:3px;height:469px;background:#b2b2b2;"></div>
<span style="left:1148.0px;top:1122.2px;font-size:21px;line-height:27px;color:#8e8e90;transform:scaleX(1.0403);transform-origin:0 0;">Невизначені оплати</span>
<div style="left:31.4px;top:1155.6px;width:210px;height:50.5px;background:#fff;border:2px solid #b4b4b4;"></div>
<svg style="left:160.4px;top:1171.6px" width="19" height="19" viewBox="0 0 19 19"><path d="M1 1L18 18M18 1L1 18" stroke="#000" stroke-width="2" fill="none"/></svg>
<svg style="left:200.4px;top:1169.6px" width="23" height="23" viewBox="0 0 24 24"><circle cx="9.5" cy="9.5" r="7.5" fill="none" stroke="#000" stroke-width="3"/><path d="M15 15L22.5 22.5" stroke="#000" stroke-width="3.6" stroke-linecap="butt"/></svg>
<svg style="left:225.4px;top:1179.6px" width="9" height="5.5" viewBox="0 0 9 5.5"><path d="M0 0H9L4.5 5.5Z" fill="#000"/></svg>
<div style="left:262.5px;top:1167px;width:2px;height:29px;background:#b0b0b0;"></div>
<svg style="left:299.6px;top:1163px" width="29.5" height="35.6" viewBox="0 0 30 36"><path d="M1.5 1.5H18L28.5 12V34.5H1.5Z" fill="none" stroke="#222" stroke-width="2.4" stroke-linejoin="round"/><path d="M18 1.5V12H28.5" fill="none" stroke="#222" stroke-width="2.2"/><path d="M15 15V29M8 22H22" stroke="#222" stroke-width="2.2"/></svg>
<svg style="left:359px;top:1163px" width="31" height="35.6" viewBox="0 0 31 36"><path d="M4 8H27V32Q27 34.5 24.5 34.5H6.5Q4 34.5 4 32Z" fill="none" stroke="#e9493c" stroke-width="2.4"/><path d="M0 7H31M10 6V1.5H21V6" fill="none" stroke="#e9493c" stroke-width="2.6"/><path d="M12 13V29M19 13V29" stroke="#e9493c" stroke-width="2.6"/></svg>
<svg style="left:427px;top:1162.5px" width="35" height="35" viewBox="0 0 36 36"><path d="M2.5 16A15 15 0 0 1 29.5 8.5" fill="none" stroke="#3478f6" stroke-width="2.5"/><path d="M31.5 1V11H21.5" fill="none" stroke="#3478f6" stroke-width="2.5"/><path d="M33.5 20A15 15 0 0 1 6.5 27.5" fill="none" stroke="#3478f6" stroke-width="2.5"/><path d="M4.5 35V25H14.5" fill="none" stroke="#3478f6" stroke-width="2.5"/></svg>
<svg style="left:487px;top:1163.5px" width="35" height="35" viewBox="0 0 34 34"><path d="M10.58 4.96A6.6 6.6 0 1 1 4.96 10.58" fill="none" stroke="#222" stroke-width="8.4"/><path d="M17 17L28 28" stroke="#222" stroke-width="8.2" stroke-linecap="round"/><path d="M12.87 5.04A6.6 6.6 0 1 1 5.04 12.87" fill="none" stroke="#f0f0f0" stroke-width="3.6"/><path d="M15 15L28 28" stroke="#f0f0f0" stroke-width="3.4" stroke-linecap="round"/></svg>
<div style="left:540.5px;top:1167px;width:2px;height:29px;background:#b0b0b0;"></div>
<svg style="left:568px;top:1162.5px" width="37" height="36" viewBox="0 0 37 36"><path d="M6 27L8 19L24 2L31 9L15 25Z" fill="none" stroke="#222" stroke-width="2.4" stroke-linejoin="round"/><path d="M20 6L27 13" stroke="#222" stroke-width="2.2"/><path d="M0 34.5H37" stroke="#222" stroke-width="2.6"/></svg>
<svg style="left:627.5px;top:1168.5px" width="41" height="25" viewBox="0 0 41 25"><path d="M0 0H28L41 12V25H0Z" fill="#5856d6"/><path d="M28 0L41 12H28Z" fill="#e6e6f6"/><path d="M5 7H16M5 18H16M8 12.5H24M19 7L24.5 12.5L19 18" fill="none" stroke="#fff" stroke-width="2.2"/></svg>
<svg style="left:691.5px;top:1162px" width="37" height="37" viewBox="0 0 37 37"><circle cx="18.5" cy="18.5" r="18.5" fill="#858585"/><path d="M13 28V11M8 16L13 10L18 16M24 28V11M19 16L24 10L29 16" fill="none" stroke="#e0e0e0" stroke-width="2.2"/></svg>
<svg style="left:753px;top:1163.5px" width="37" height="34" viewBox="0 0 36 34"><path d="M0 17L17.6 0V7.5H33Q36 7.5 36 10.5V23.5Q36 26.5 33 26.5H17.6V34Z" fill="#666"/></svg>
<div style="left:30.4px;top:1211px;width:2442.6px;height:231.6px;background:#fff;border:2px solid #c0c0c0;"></div>
<div style="left:35px;top:1215px;width:2429px;height:70px;background:#f0f0f0;"></div>
<div style="left:35px;top:1285px;width:2430px;height:2px;background:#c0c0c0;"></div>
<div style="left:35px;top:1331px;width:2430px;height:2px;background:#c0c0c0;"></div>
<div style="left:208px;top:1215px;width:2px;height:117px;background:#c0c0c0;"></div>
<div style="left:338px;top:1215px;width:2px;height:117px;background:#c0c0c0;"></div>
<div style="left:494px;top:1215px;width:2px;height:117px;background:#c0c0c0;"></div>
<div style="left:594px;top:1215px;width:2px;height:117px;background:#c0c0c0;"></div>
<div style="left:875px;top:1215px;width:2px;height:117px;background:#c0c0c0;"></div>
<div style="left:1091.7px;top:1215px;width:2px;height:117px;background:#c0c0c0;"></div>
<div style="left:1346px;top:1215px;width:2px;height:117px;background:#c0c0c0;"></div>
<div style="left:1512px;top:1215px;width:2px;height:117px;background:#c0c0c0;"></div>
<div style="left:1646px;top:1215px;width:2px;height:117px;background:#c0c0c0;"></div>
<div style="left:1828px;top:1215px;width:2px;height:117px;background:#c0c0c0;"></div>
<div style="left:1975.5px;top:1215px;width:2px;height:117px;background:#c0c0c0;"></div>
<div style="left:2095.5px;top:1215px;width:2px;height:117px;background:#c0c0c0;"></div>
<div style="left:2463px;top:1215px;width:2px;height:117px;background:#c0c0c0;"></div>
<span style="left:41.0px;top:1236.0px;font-size:23px;line-height:30px;color:#000;transform:scaleX(0.9613);transform-origin:0 0;">Дата</span>
<span style="right:2165.5px;top:1236.0px;font-size:23px;line-height:30px;color:#000;transform:scaleX(0.9613);transform-origin:100% 0;">Номер</span>
<span style="right:2009.5px;top:1236.0px;font-size:23px;line-height:30px;color:#000;transform:scaleX(0.9034);transform-origin:100% 0;">Сума</span>
<span style="left:501.0px;top:1236.0px;font-size:23px;line-height:30px;color:#000;font-weight:bold;transform:scaleX(0.9984);transform-origin:0 0;">Валюта</span>
<span style="left:601.0px;top:1236.0px;font-size:23px;line-height:30px;color:#000;transform:scaleX(0.9269);transform-origin:0 0;">Одержувач</span>
<span style="left:882.0px;top:1236.0px;font-size:23px;line-height:30px;color:#000;transform:scaleX(0.9613);transform-origin:0 0;">Каса</span>
<span style="left:1098.7px;top:1236.0px;font-size:23px;line-height:30px;color:#000;transform:scaleX(0.9551);transform-origin:0 0;">Розрахунковий рахунок</span>
<span style="left:1353.0px;top:1236.0px;font-size:23px;line-height:30px;color:#000;transform:scaleX(0.9613);transform-origin:0 0;">Місто</span>
<span style="left:1519.0px;top:1236.0px;font-size:23px;line-height:30px;color:#000;transform:scaleX(0.9613);transform-origin:0 0;display:block;overflow:hidden;width:130.0px;">Співробітник</span>
<span style="left:1653.0px;top:1236.0px;font-size:23px;line-height:30px;color:#000;transform:scaleX(0.9613);transform-origin:0 0;">Дата рахунку</span>
<span style="right:528.0px;top:1221.7px;font-size:23px;line-height:30px;color:#000;transform:scaleX(0.9613);transform-origin:100% 0;">Номер</span>
<span style="right:528.0px;top:1248.8px;font-size:23px;line-height:30px;color:#000;transform:scaleX(0.9613);transform-origin:100% 0;">рахунку</span>
<span style="left:1982.5px;top:1236.0px;font-size:23px;line-height:30px;color:#000;transform:scaleX(0.9613);transform-origin:0 0;">Опис</span>
<span style="left:2102.5px;top:1221.7px;font-size:23px;line-height:30px;color:#000;transform:scaleX(0.9330);transform-origin:0 0;">Інформація про рахунок</span>
<span style="left:2102.5px;top:1248.8px;font-size:23px;line-height:30px;color:#000;transform:scaleX(0.9545);transform-origin:0 0;">відправника</span>
<div style="left:35px;top:1287px;width:173px;height:44px;background:#62a0d2;"></div>
<span style="left:43.5px;top:1294.0px;font-size:23px;line-height:30px;color:#fff;transform:scaleX(0.9264);transform-origin:0 0;">27.07.2023 15...</span>
<span style="right:2169.5px;top:1294.0px;font-size:23px;line-height:30px;color:#000;transform:scaleX(0.9374);transform-origin:100% 0;">62</span>
<span style="left:346.0px;top:1285.6px;font-size:33px;line-height:43px;color:#3478f6;transform:scaleX(0.8889);transform-origin:0 0;-webkit-text-stroke:0.7px #3478f6;">бн</span>
<span style="right:2013.0px;top:1294.0px;font-size:23px;line-height:30px;color:#000;transform:scaleX(0.9374);transform-origin:100% 0;">500,00</span>
<span style="left:505.0px;top:1294.0px;font-size:23px;line-height:30px;color:#000;transform:scaleX(1.0036);transform-origin:0 0;">грн</span>
<span style="left:1103.0px;top:1294.0px;font-size:23px;line-height:30px;color:#000;transform:scaleX(0.9641);transform-origin:0 0;">р/с №Розрахунковий...</span>
<div style="left:35.6px;top:1449px;width:106.4px;height:45.5px;background:#e4e4e6;"></div>
<span style="left:51.0px;top:1457.5px;font-size:23px;line-height:30px;color:#000;font-weight:bold;transform:scaleX(1.0520);transform-origin:0 0;">К-сть</span>
<span style="left:122.0px;top:1457.5px;font-size:23px;line-height:30px;color:#000;transform:scaleX(0.9374);transform-origin:0 0;">1</span>
<div style="left:147px;top:1449px;width:157px;height:45.5px;background:#e4e4e6;"></div>
<span style="left:161.0px;top:1457.5px;font-size:23px;line-height:30px;color:#000;font-weight:bold;transform:scaleX(0.9727);transform-origin:0 0;">Сума</span>
<span style="left:225.0px;top:1457.5px;font-size:23px;line-height:30px;color:#000;transform:scaleX(0.9667);transform-origin:0 0;">500,00</span>
<div style="left:309.6px;top:1449px;width:124.1px;height:45.5px;background:#e4e4e6;"></div>
<span style="left:327.5px;top:1448.6px;font-size:33px;line-height:43px;color:#3478f6;transform:scaleX(0.8889);transform-origin:0 0;-webkit-text-stroke:0.7px #3478f6;">бн</span>
<span style="left:373.0px;top:1459.7px;font-size:21px;line-height:27px;color:#777;transform:scaleX(1.0164);transform-origin:0 0;">Банк</span>
<div style="left:30px;top:1502px;width:2443px;height:6px;background:#bdbdbd;"></div>
<div style="left:30px;top:1506px;width:2443px;height:82.5px;background:#fff;border:2px solid #6e6e6e;"></div>
</body></html>
